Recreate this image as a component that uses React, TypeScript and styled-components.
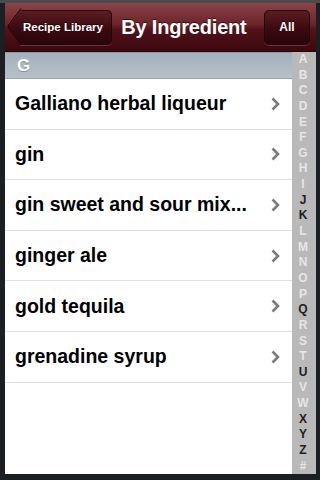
import { FC } from "react";
import styled, { createGlobalStyle } from "styled-components";

const GlobalStyle = createGlobalStyle`
  html, body {
    margin: 0;
    padding: 0;
    background: #1b1f23;
  }
  body {
    font-family: "Liberation Sans", Arial, sans-serif;
  }
`;

const Frame = styled.div`
  width: 320px;
  height: 480px;
  box-sizing: border-box;
  background: #1b1f23;
  border-top: 3px solid #4a4b4d;
  padding: 0 4px 6px 5px;
  display: flex;
  flex-direction: column;
  overflow: hidden;
`;

const NavBar = styled.div`
  height: 48px;
  flex-shrink: 0;
  display: flex;
  align-items: center;
  padding: 0 6px 0 5px;
  background: linear-gradient(
    to bottom,
    #8a444a 0%,
    #6c232a 45%,
    #52121a 55%,
    #3c080e 100%
  );
  border-bottom: 1px solid #2a0508;
`;

const BackButton = styled.div`
  position: relative;
  height: 33px;
  margin-left: 10px;
  padding: 0 8px 0 3px;
  display: flex;
  align-items: center;
  color: #fff;
  font-size: 11.5px;
  font-weight: bold;
  background: linear-gradient(to bottom, #5a1d22 0%, #3a0a0f 55%, #2a0508 100%);
  border: 1px solid #200306;
  border-left: none;
  border-radius: 0 5px 5px 0;
  box-shadow: 0 1px 0 rgba(255, 255, 255, 0.18);
  text-shadow: 0 -1px 0 rgba(0, 0, 0, 0.6);

  &::before {
    content: "";
    position: absolute;
    left: -11px;
    top: 4px;
    width: 22px;
    height: 22px;
    transform: rotate(45deg) skew(8deg, 8deg);
    background: linear-gradient(135deg, #5a1d22 0%, #3a0a0f 55%, #2a0508 100%);
    border-left: 1px solid #200306;
    border-bottom: 1px solid #200306;
    border-radius: 0 0 0 4px;
    z-index: 0;
  }

  span {
    position: relative;
    z-index: 1;
  }
`;

const Title = styled.div`
  flex: 1;
  text-align: center;
  color: #fff;
  font-size: 20px;
  font-weight: bold;
  letter-spacing: -0.2px;
  padding-right: 8px;
  text-shadow: 0 -1px 0 rgba(0, 0, 0, 0.6);
`;

const BarButton = styled.div`
  height: 33px;
  width: 44px;
  display: flex;
  align-items: center;
  justify-content: center;
  color: #fff;
  font-size: 12px;
  font-weight: bold;
  background: linear-gradient(to bottom, #5a1d22 0%, #3a0a0f 55%, #2a0508 100%);
  border: 1px solid #200306;
  border-radius: 5px;
  box-shadow: 0 1px 0 rgba(255, 255, 255, 0.18);
  text-shadow: 0 -1px 0 rgba(0, 0, 0, 0.6);
`;

const Body = styled.div`
  flex: 1;
  display: flex;
  background: #fff;
  overflow: hidden;
`;

const ListColumn = styled.div`
  flex: 1;
  display: flex;
  flex-direction: column;
`;

const SectionHeader = styled.div`
  height: 25px;
  flex-shrink: 0;
  display: flex;
  align-items: center;
  padding-left: 12px;
  color: #fff;
  font-size: 17px;
  font-weight: bold;
  background: linear-gradient(to bottom, #a3b1bc 0%, #b5c0c9 100%);
  border-top: 1px solid #8f9ca7;
  border-bottom: 1px solid #9aa6b0;
  text-shadow: 0 1px 0 rgba(80, 90, 100, 0.5);
`;

const Row = styled.div`
  height: 50.6px;
  flex-shrink: 0;
  display: flex;
  align-items: center;
  padding: 0 12px 0 10px;
  border-bottom: 1px solid #e1e1e1;
  box-sizing: border-box;
`;

const RowLabel = styled.div`
  flex: 1;
  color: #000;
  font-size: 19.5px;
  font-weight: bold;
  white-space: nowrap;
  overflow: hidden;
`;

const Chevron = styled.svg`
  width: 9px;
  height: 14px;
  flex-shrink: 0;
`;

const IndexBar = styled.div`
  width: 24px;
  flex-shrink: 0;
  display: flex;
  flex-direction: column;
  justify-content: space-between;
  align-items: center;
  padding: 0 2px 1px 0;
  box-sizing: border-box;
  background: #b9b9b9;
`;

const IndexLetter = styled.div<{ $active: boolean }>`
  font-size: 12px;
  line-height: 14px;
  font-weight: bold;
  color: ${({ $active }) => ($active ? "#1e1e1e" : "#e6e6e6")};
`;

const items = [
  "Galliano herbal liqueur",
  "gin",
  "gin sweet and sour mix...",
  "ginger ale",
  "gold tequila",
  "grenadine syrup",
];

const letters = "ABCDEFGHIJKLMNOPQRSTUVWXYZ#".split("");
const activeLetters = "JKQUXYZ";

const ChevronIcon: FC = () => (
  <Chevron viewBox="0 0 9 14">
    <path
      d="M1.5 1.5 L7 7 L1.5 12.5"
      fill="none"
      stroke="#7b7b7b"
      strokeWidth="2.6"
      strokeLinecap="butt"
    />
  </Chevron>
);

export default function App() {
  return (
    <>
      <GlobalStyle />
      <Frame>
        <NavBar>
          <BackButton>
            <span>Recipe Library</span>
          </BackButton>
          <Title>By Ingredient</Title>
          <BarButton>All</BarButton>
        </NavBar>
        <Body>
          <ListColumn>
            <SectionHeader>G</SectionHeader>
            {items.map((item) => (
              <Row key={item}>
                <RowLabel>{item}</RowLabel>
                <ChevronIcon />
              </Row>
            ))}
          </ListColumn>
          <IndexBar>
            {letters.map((l) => (
              <IndexLetter key={l} $active={activeLetters.includes(l)}>
                {l}
              </IndexLetter>
            ))}
          </IndexBar>
        </Body>
      </Frame>
    </>
  );
}
